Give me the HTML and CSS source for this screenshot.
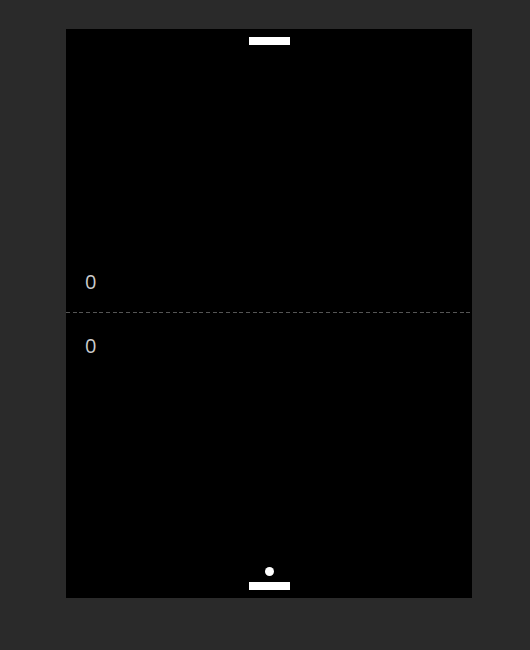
FILE: index.html
```html
<!DOCTYPE html>
<html lang="en">

<head>
    <meta charset="UTF-8">
    <meta name="viewport" content="width=device-width, initial-scale=1.0">
    <title>Pong</title>
    <link rel="stylesheet" href="styles.css">
</head>

<body>
    <div class="court">
        <div class="paddle paddle-top"></div>

        <div class="score score-top">0</div>
        <div class="net"></div>
        <div class="score score-bottom">0</div>

        <div class="ball"></div>
        <div class="paddle paddle-bottom"></div>
    </div>
</body>

</html>
```

FILE: styles.css
```css
body {
    margin: 0;
    padding: 29px 0 0 66px;
    background: #2a2a2a;
    font-family: "Open Sans", sans-serif;
}

.court {
    position: relative;
    width: 406px;
    height: 569px;
    background: #000;
}

/* game objects sit on the court by coordinates */
.paddle {
    position: absolute;
    left: 183px;
    width: 41px;
    height: 8px;
    background: #fff;
}

.paddle-top {
    top: 8px;
}

.paddle-bottom {
    top: 553px;
}

.ball {
    position: absolute;
    left: 199px;
    top: 538px;
    width: 9px;
    height: 9px;
    border-radius: 50%;
    background: #fff;
}

.net {
    position: absolute;
    left: 0;
    top: 283px;
    width: 100%;
    height: 1px;
    background: repeating-linear-gradient(90deg, #555 0, #555 4px, transparent 4px, transparent 6.67px);
}

.score {
    position: absolute;
    left: 19px;
    font-size: 20px;
    line-height: 20px;
    color: #ccc;
}

.score-top {
    top: 243px;
}

.score-bottom {
    top: 307px;
}
```
